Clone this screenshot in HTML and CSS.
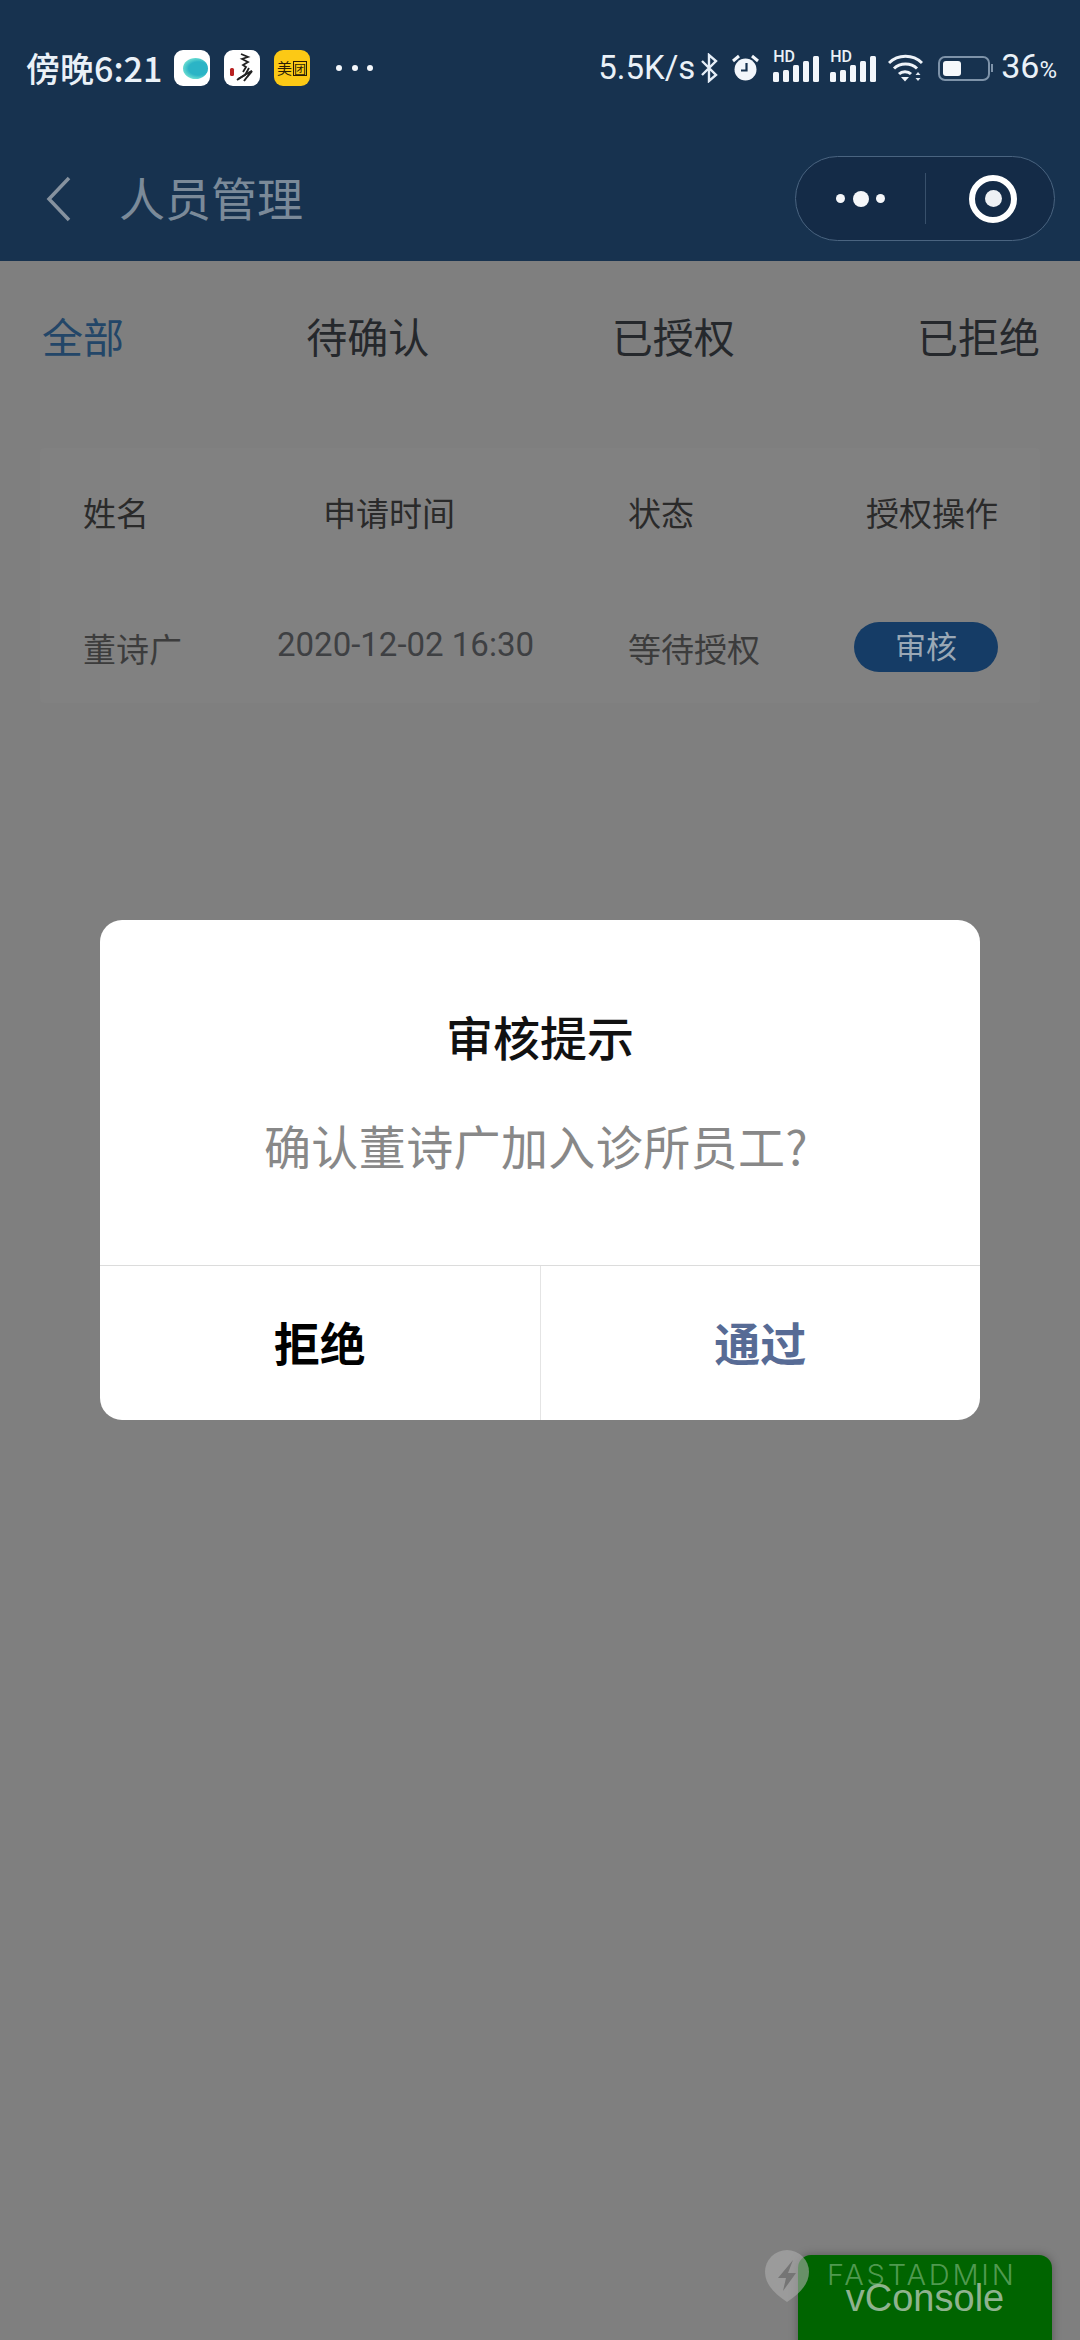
FILE: index.html
```html
<!DOCTYPE html>
<html lang="zh-CN">
<head>
  <meta charset="UTF-8">
  <meta name="viewport" content="width=device-width, initial-scale=1.0">
  <title>人员管理</title>
  <link rel="stylesheet" href="styles.css">
</head>
<body>
  <header class="topbar">
    <div class="status">
      <div class="status-left">
        <span class="clock">傍晚6:21</span>
        <span class="app-icon"><span class="blob"></span></span>
        <span class="app-icon">
          <svg viewBox="0 0 36 36" width="36" height="36">
            <path d="M17 4l7 3-6 2 6 3-5 3 3 2-3 5M25 18l-4 7-7 4" fill="none" stroke="#222" stroke-width="1.800"/>
            <path d="M13 30l9-6 6-3-5 6-3 4" fill="none" stroke="#222" stroke-width="2"/>
            <rect x="6" y="18" width="4" height="8" rx="1.500" fill="#b92222"/>
          </svg>
        </span>
        <span class="app-icon app-yellow"><span class="mei">美</span><span class="tuan">团</span></span>
        <span class="more-dots"><i></i><i></i><i></i></span>
      </div>
      <div class="status-right">
        <span class="speed">5.5K/s</span>
        <svg class="ic-bt" viewBox="0 0 18 30" width="18" height="30">
          <path d="M2 8l14 14-7 6V2l7 6L2 22" fill="none" stroke="#e6eef7" stroke-width="2.400"/>
        </svg>
        <svg class="ic-alarm" viewBox="0 0 27 28" width="27" height="28">
          <circle cx="13.500" cy="15.500" r="11" fill="#f2f6fb"/>
          <path d="M1 7l6-5M26 7l-6-5" stroke="#f2f6fb" stroke-width="3"/>
          <path d="M14.500 9v7.500H9" fill="none" stroke="#17324f" stroke-width="2.200"/>
        </svg>
        <span class="signal"><b>HD</b><svg viewBox="0 0 46 28" width="46" height="28"><rect x="0" y="18" width="6" height="10" rx="1.500"/><rect x="10" y="16" width="6" height="12" rx="1.500"/><rect x="20" y="11" width="6" height="17" rx="1.500"/><rect x="30" y="7" width="6" height="21" rx="1.500"/><rect x="40" y="2" width="6" height="26" rx="1.500"/></svg></span>
        <span class="signal"><b>HD</b><svg viewBox="0 0 46 28" width="46" height="28"><rect x="0" y="18" width="6" height="10" rx="1.500"/><rect x="10" y="16" width="6" height="12" rx="1.500"/><rect x="20" y="11" width="6" height="17" rx="1.500"/><rect x="30" y="7" width="6" height="21" rx="1.500"/><rect x="40" y="2" width="6" height="26" rx="1.500"/></svg></span>
        <svg class="ic-wifi" viewBox="0 0 35 28" width="35" height="28">
          <path d="M1 9c9-9 24-9 33 0M6 14.500c6-6 17-6 23 0M11 20c3-3 9-3 12 0" fill="none" stroke="#eef3f9" stroke-width="3"/>
          <path d="M13 23h8l-4 4.500z" fill="#eef3f9"/>
          <path d="M27.500 21l2.500-3 2.500 3zM27.500 24h5l-2.500 3z" fill="#dfe7f0"/>
        </svg>
        <span class="battery"><span class="battery-fill"></span></span>
        <span class="batt-num">36<small>%</small></span>
      </div>
    </div>
    <nav class="navbar">
      <div class="nav-left">
        <svg class="back" viewBox="0 0 26 46" width="26" height="46">
          <path d="M23 2L3 23l20 21" fill="none" stroke="#86929f" stroke-width="3.500"/>
        </svg>
        <span class="nav-title">人员管理</span>
      </div>
      <div class="capsule">
        <div class="capsule-dots"><i></i><i class="big"></i><i></i></div>
        <div class="capsule-line"></div>
        <div class="capsule-ring"><i></i></div>
      </div>
    </nav>
  </header>

  <main class="content">
    <div class="tabs">
      <span class="tab active">全部</span>
      <span class="tab">待确认</span>
      <span class="tab">已授权</span>
      <span class="tab">已拒绝</span>
    </div>
    <section class="table-card">
      <div class="row head">
        <span>姓名</span>
        <span class="head-time">申请时间</span>
        <span>状态</span>
        <span class="head-op">授权操作</span>
      </div>
      <div class="row body-row">
        <span>董诗广</span>
        <span class="date">2020-12-02 16:30</span>
        <span>等待授权</span>
        <span class="audit-btn">审核</span>
      </div>
    </section>
  </main>

  <div class="modal-wrap">
    <div class="modal">
      <div class="modal-body">
        <h2 class="modal-title">审核提示</h2>
        <p class="modal-text">确认董诗广加入诊所员工?</p>
      </div>
      <div class="modal-btns">
        <span class="modal-btn">拒绝</span>
        <span class="modal-btn ok">通过</span>
      </div>
    </div>
  </div>

  <div class="vconsole">vConsole</div>
  <div class="watermark">
    <svg viewBox="0 0 44 52" width="44" height="52">
      <path d="M22 0a22 22 0 0 1 22 22c0 13-11 23-22 30C11 45 0 35 0 22A22 22 0 0 1 22 0z" fill="#adadad" fill-opacity=".6"/>
      <path d="M28 10L13 28h8l-3 13 13-18h-8z" fill="#757575"/>
    </svg>
    <span class="wm-text">FASTADMIN</span>
  </div>
</body>
</html>
```

FILE: styles.css
```css
* {
  box-sizing: border-box;
}
html, body {
  height: 100%;
}
body {
  margin: 0;
  position: relative;
  height: 2340px;
  overflow: hidden;
  background: #7f7f7f;
  font-family: "Noto Sans CJK SC", "Noto Sans", sans-serif;
  color: #2a2a2a;
}

/* top bar */
.topbar {
  height: 261px;
  background: #17324f;
}
.status {
  height: 136px;
  padding: 0 23px 0 26px;
  display: flex;
  align-items: center;
  justify-content: space-between;
  color: #eaf1f8;
}
.status-left, .status-right {
  display: flex;
  align-items: center;
}
.clock {
  font-size: 34px;
  font-weight: 500;
  line-height: 40px;
  width: 148px;
  white-space: nowrap;
}
.app-icon {
  width: 36px;
  height: 36px;
  margin-right: 14px;
  border-radius: 9px;
  background: #fff;
  display: flex;
  align-items: center;
  justify-content: center;
  overflow: hidden;
}
.blob {
  width: 25px;
  height: 21px;
  margin-left: 6px;
  border-radius: 50%;
  background: radial-gradient(ellipse at 62% 50%, #2bb4c6 45%, #6fe0d2 75%, #dff8f3 100%);
}
.app-yellow {
  background: #fcc915;
  gap: 1px;
  color: #2a1c05;
  font-size: 15px;
  line-height: 16px;
  margin-right: 0;
}
.tuan {
  border: 1.500px solid #2a1c05;
  font-size: 12px;
  line-height: 13px;
}
.more-dots {
  display: flex;
  gap: 9.500px;
  margin-left: 26px;
}
.more-dots i {
  width: 6px;
  height: 6px;
  border-radius: 50%;
  background: #f4f7fb;
}
.speed {
  font-family: Roboto, "Noto Sans", sans-serif;
  font-size: 33px;
  line-height: 40px;
  width: 102px;
  white-space: nowrap;
}
.ic-bt {
  margin-right: 14px;
}
.ic-alarm {
  margin-right: 14px;
}
.signal {
  position: relative;
  width: 47px;
  height: 28px;
  margin: 0 10px 0 0;
  display: block;
}
.signal svg {
  display: block;
  fill: #f2f6fb;
}
.signal b {
  position: absolute;
  left: 0;
  top: -3px;
  font-family: Roboto, sans-serif;
  font-size: 16px;
  font-weight: 500;
  line-height: 12px;
}
.signal + .ic-wifi {
  margin-left: 1px;
}
.ic-wifi {
  margin-right: 15px;
}
.battery {
  position: relative;
  width: 52px;
  height: 25px;
  padding: 3px;
  border: 2px solid #7e93a9;
  border-radius: 7px;
  display: block;
  margin-right: 11px;
}
.battery::after {
  content: "";
  position: absolute;
  right: -5px;
  top: 6px;
  width: 2px;
  height: 8px;
  background: #7e93a9;
}
.battery-fill {
  display: block;
  width: 18px;
  height: 100%;
  background: #f6f8fb;
  border-radius: 3px;
}
.batt-num {
  font-family: Roboto, "Noto Sans", sans-serif;
  font-size: 34px;
  line-height: 40px;
  white-space: nowrap;
}
.batt-num small {
  font-size: 24px;
}
.navbar {
  height: 125px;
  padding: 0 25px 0 46px;
  display: flex;
  align-items: center;
  justify-content: space-between;
}
.nav-left {
  display: flex;
  align-items: center;
  gap: 47px;
}
.back {
  display: block;
}
.nav-title {
  font-size: 46px;
  line-height: 60px;
  margin-top: -6px;
  color: #7b8a99;
}
.capsule {
  width: 260px;
  height: 85px;
  border: 1px solid #4a6480;
  border-radius: 43px;
  background: #142b47;
  display: flex;
  align-items: center;
}
.capsule-dots {
  width: 129px;
  display: flex;
  align-items: center;
  justify-content: flex-end;
  gap: 7.500px;
  padding-right: 40px;
}
.capsule-dots i {
  width: 9px;
  height: 9px;
  border-radius: 50%;
  background: #f5f7fa;
}
.capsule-dots .big {
  width: 16px;
  height: 16px;
}
.capsule-line {
  width: 1px;
  height: 51px;
  background: #38506b;
}
.capsule-ring {
  width: 48px;
  height: 48px;
  margin-left: 43px;
  border: 6px solid #fff;
  border-radius: 50%;
  display: flex;
  align-items: center;
  justify-content: center;
}
.capsule-ring i {
  width: 17px;
  height: 17px;
  border-radius: 50%;
  background: #eef1f4;
}

/* page */
.content {
  padding: 0 40px;
}
.tabs {
  height: 187px;
  padding: 0 0 0 2px;
  display: flex;
  align-items: flex-start;
  justify-content: space-between;
}
.tab {
  margin-top: 44px;
  font-size: 41px;
  line-height: 60px;
  color: #25282c;
}
.tab.active {
  color: #234668;
}
.table-card {
  width: 1000px;
  height: 255px;
  background: #818181;
  border-radius: 4px;
  padding-top: 39px;
}
.row {
  display: grid;
  grid-template-columns: 194px 351px 226px 144px;
  padding-left: 43px;
  font-size: 33px;
  line-height: 50px;
  color: #2a2a2a;
}
.body-row {
  margin-top: 86px;
  color: #3c3c3c;
  align-items: center;
}
.head-time {
  margin-left: 46px;
}
.head-op {
  white-space: nowrap;
  justify-self: end;
}
.date {
  font-family: Roboto, sans-serif;
  font-size: 33px;
  line-height: 44px;
  margin-top: -6px;
  color: #3e4043;
}
.audit-btn {
  height: 50px;
  margin-top: -2px;
  border-radius: 25px;
  background: #153c66;
  color: #9aa8b5;
  font-size: 31px;
  line-height: 46px;
  text-align: center;
}

/* dialog */
.modal-wrap {
  position: absolute;
  inset: 0;
  display: flex;
  align-items: center;
  justify-content: center;
}
.modal {
  width: 880px;
  height: 500px;
  background: #fff;
  border-radius: 22px;
  overflow: hidden;
  display: flex;
  flex-direction: column;
}
.modal-body {
  height: 346px;
  text-align: center;
  border-bottom: 1px solid #dcdcdc;
}
.modal-title {
  margin: 81px 0 0;
  font-size: 47px;
  font-weight: 500;
  line-height: 70px;
  color: #111;
}
.modal-text {
  margin: 39px 0 0;
  padding-right: 8px;
  font-size: 47px;
  letter-spacing: .4px;
  line-height: 70px;
  color: #888;
}
.modal-btns {
  flex: 1;
  display: flex;
}
.modal-btn {
  flex: 1;
  text-align: center;
  font-size: 46px;
  font-weight: 700;
  line-height: 150px;
  color: #000;
}
.modal-btn.ok {
  color: #576b95;
  border-left: 1px solid #e4e4e4;
}

/* vConsole and watermark float over the page */
.vconsole {
  position: absolute;
  left: 798px;
  top: 2255px;
  width: 254px;
  height: 110px;
  padding-top: 18px;
  border-radius: 13px;
  background: #006400;
  box-shadow: 0 0 10px rgba(0, 0, 0, .3);
  color: #8fb38f;
  font-family: "Liberation Sans", Arial, sans-serif;
  font-size: 38px;
  line-height: 50px;
  text-align: center;
}
.watermark {
  position: absolute;
  left: 765px;
  top: 2250px;
  display: flex;
  align-items: center;
  gap: 18px;
}
.watermark svg {
  display: block;
}
.wm-text {
  font-family: Inter, "Noto Sans", sans-serif;
  font-size: 29px;
  font-weight: 300;
  letter-spacing: 2.800px;
  line-height: 40px;
  margin-top: -2px;
  color: rgba(150, 200, 150, .55);
}
```
